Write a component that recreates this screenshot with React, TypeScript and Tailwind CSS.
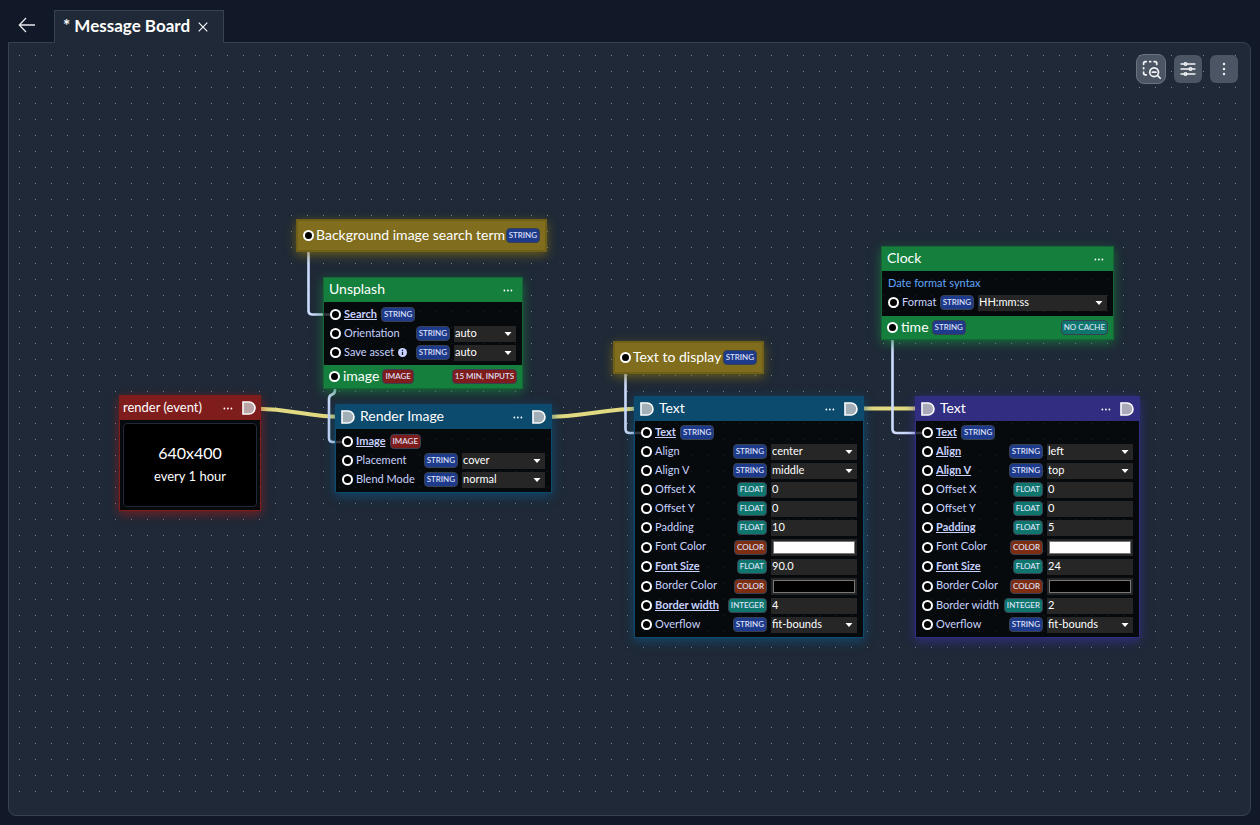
import { useState } from "react";
import type { ReactNode } from "react";
import { TbZoomOutArea } from "react-icons/tb";
import { HiOutlineAdjustmentsHorizontal } from "react-icons/hi2";

type Kind = "STRING" | "FLOAT" | "INTEGER" | "COLOR" | "IMAGE";

type Field = {
  name: string;
  kind: Kind;
  value?: string;
  control?: "select" | "text" | "color";
  changed?: boolean;
  info?: boolean;
};

const kindColors: Record<Kind, string> = {
  STRING: "bg-[#1e3a8a]",
  FLOAT: "bg-[#0f766e]",
  INTEGER: "bg-[#0f766e]",
  COLOR: "bg-[#7c2d12]",
  IMAGE: "bg-[#7f1d1d]",
};

function Tag({ color, children }: { color: string; children: ReactNode }) {
  return (
    <span
      className={`flex h-[15px] shrink-0 items-center rounded border border-[#374151] px-[2px] pb-px text-[8px] leading-none font-medium whitespace-nowrap text-[#e0e7ff] ${color}`}
    >
      {children}
    </span>
  );
}

function Port() {
  return <span className="size-[11px] shrink-0 rounded-full border-2 border-white bg-black" />;
}

function FlowPort({ label }: { label: string }) {
  return (
    <svg viewBox="0 0 14 14" className="size-[14px] shrink-0" role="img" aria-label={label}>
      <path d="M1.2 1.2H7a5.8 5.8 0 0 1 0 11.6H1.2Z" fill="#c8c8c8" fillOpacity="0.8" />
      <path d="M1 1H7a6 6 0 0 1 0 12H1Z" fill="none" stroke="#fff" strokeWidth="1.6" />
    </svg>
  );
}

function NodeMenu() {
  return (
    <button type="button" aria-label="Node menu" className="flex h-4 items-center px-1">
      <svg viewBox="0 0 10 3" className="h-[3px] w-[10px]" fill="#fff">
        <circle cx="1.4" cy="1.5" r="0.9" />
        <circle cx="4.9" cy="1.5" r="0.9" />
        <circle cx="8.4" cy="1.5" r="0.9" />
      </svg>
    </button>
  );
}

function Control({ id, field, width }: { id: string; field: Field; width: string }) {
  const [value, setValue] = useState(field.value ?? "");
  if (field.control === "select") {
    return (
      <span className={`relative flex h-4 shrink-0 ${width}`}>
        <select
          id={id}
          value={value}
          onChange={(e) => setValue(e.target.value)}
          className="h-4 w-full appearance-none rounded-none bg-[#262626] pb-0.5 pl-px text-[11px] leading-[14px] text-white outline-none"
        >
          <option>{field.value}</option>
        </select>
        <svg viewBox="0 0 8 4" className="pointer-events-none absolute top-[6px] right-1 h-1 w-2" fill="#fff">
          <path d="M0.5 0h7L4 4Z" />
        </svg>
      </span>
    );
  }
  if (field.control === "color") {
    return (
      <input
        id={id}
        type="color"
        value={value}
        onChange={(e) => setValue(e.target.value)}
        className={`h-[17px] shrink-0 bg-[#262626] p-[2px] [&::-webkit-color-swatch]:border-[#777] [&::-webkit-color-swatch-wrapper]:p-0 ${width}`}
      />
    );
  }
  return (
    <input
      id={id}
      type="text"
      value={value}
      onChange={(e) => setValue(e.target.value)}
      className={`h-4 shrink-0 bg-[#262626] pb-0.5 pl-px text-[11px] leading-[14px] text-white outline-none ${width}`}
    />
  );
}

function FieldRow({ nodeId, field, width }: { nodeId: string; field: Field; width: string }) {
  const id = `${nodeId}-${field.name.toLowerCase().replace(/ /g, "-")}`;
  const tone = field.changed ? "font-bold underline" : "";
  const height = field.control === "color" ? "h-5" : "h-[19px]";
  return (
    <div className={`flex items-center ${height}`}>
      <Port />
      {field.control ? (
        <label
          htmlFor={id}
          className={`ml-[3px] flex items-center gap-1 pb-0.5 text-[11px] leading-4 whitespace-nowrap text-[#c7d2fe] ${tone}`}
        >
          {field.name}
          {field.info && (
            <svg viewBox="0 0 10 10" className="mt-0.5 size-[9px]" aria-hidden="true">
              <circle cx="5" cy="5" r="5" fill="#c7d2fe" />
              <path d="M5 4.2v3.6M5 2v1.3" stroke="#111827" strokeWidth="1.4" />
            </svg>
          )}
        </label>
      ) : (
        <span className={`ml-[3px] pb-0.5 text-[11px] leading-4 whitespace-nowrap text-[#c7d2fe] ${tone}`}>{field.name}</span>
      )}
      <span className={field.control ? "mr-1 ml-auto flex" : "ml-1 flex"}>
        <Tag color={kindColors[field.kind]}>{field.kind}</Tag>
      </span>
      {field.control && <Control id={id} field={field} width={width} />}
    </div>
  );
}

function StateNode({ place, title }: { place: string; title: string }) {
  return (
    <section
      className={`absolute flex h-[33px] items-center justify-between border-2 border-[#6f5f19] bg-[#806d1d] px-[5px] text-[14px] text-white shadow-[0_3px_10px_0_rgba(133,112,20,0.7)] ${place}`}
    >
      <span className="flex items-center gap-[2px] whitespace-nowrap">
        <Port />
        <span className="pb-0.5">{title}</span>
      </span>
      <Tag color={kindColors.STRING}>STRING</Tag>
    </section>
  );
}

type NodeProps = {
  place: string;
  frame: string;
  header: string;
  title: string;
  compact?: boolean;
  flowIn?: boolean;
  flowOut?: boolean;
  children: ReactNode;
};

function GraphNode({ place, frame, header, title, compact, flowIn, flowOut, children }: NodeProps) {
  return (
    <section className={`absolute border ${place} ${frame}`}>
      <header className={`flex h-6 items-center text-white ${compact ? "pr-1 pl-[3px]" : "px-[5px]"} ${header}`}>
        {flowIn && (
          <span className="mr-[5px] flex">
            <FlowPort label="Previous" />
          </span>
        )}
        <h2 className={`pb-0.5 leading-[22px] ${compact ? "text-[13px]" : "text-[14px]"}`}>{title}</h2>
        <span className={`ml-auto flex items-center ${flowOut ? "gap-[5px]" : ""}`}>
          <NodeMenu />
          {flowOut && <FlowPort label="Next" />}
        </span>
      </header>
      {children}
    </section>
  );
}

const blue = "border-[#0c4a6e] shadow-[0_3px_10px_0_rgba(12,84,128,0.75)]";
const green = "border-[#166534] shadow-[0_3px_10px_0_rgba(21,128,61,0.75)]";
const red = "border-[#7f1d1d] shadow-[0_3px_10px_0_rgba(153,27,27,0.7)]";
const violet = "border-[#312e81] shadow-[0_3px_10px_0_rgba(55,48,163,0.7)]";

function textFields(align: string, alignV: string, padding: string, size: string, border: string, changed: string[]): Field[] {
  const fields: Field[] = [
    { name: "Text", kind: "STRING" },
    { name: "Align", kind: "STRING", control: "select", value: align },
    { name: "Align V", kind: "STRING", control: "select", value: alignV },
    { name: "Offset X", kind: "FLOAT", control: "text", value: "0" },
    { name: "Offset Y", kind: "FLOAT", control: "text", value: "0" },
    { name: "Padding", kind: "FLOAT", control: "text", value: padding },
    { name: "Font Color", kind: "COLOR", control: "color", value: "#ffffff" },
    { name: "Font Size", kind: "FLOAT", control: "text", value: size },
    { name: "Border Color", kind: "COLOR", control: "color", value: "#000000" },
    { name: "Border width", kind: "INTEGER", control: "text", value: border },
    { name: "Overflow", kind: "STRING", control: "select", value: "fit-bounds" },
  ];
  return fields.map((f) => ({ ...f, changed: changed.includes(f.name) }));
}

const unsplashFields: Field[] = [
  { name: "Search", kind: "STRING", changed: true },
  { name: "Orientation", kind: "STRING", control: "select", value: "auto" },
  { name: "Save asset", kind: "STRING", control: "select", value: "auto", info: true },
];
const imageFields: Field[] = [
  { name: "Image", kind: "IMAGE", changed: true },
  { name: "Placement", kind: "STRING", control: "select", value: "cover" },
  { name: "Blend Mode", kind: "STRING", control: "select", value: "normal" },
];
const clockFields: Field[] = [{ name: "Format", kind: "STRING", control: "select", value: "HH:mm:ss" }];
const firstText = textFields("center", "middle", "10", "90.0", "4", ["Text", "Font Size", "Border width"]);
const secondText = textFields("left", "top", "5", "24", "2", ["Text", "Align", "Align V", "Padding", "Font Size"]);

function Fields({ id, fields, width, pad }: { id: string; fields: Field[]; width: string; pad: string }) {
  return (
    <div className={`bg-black/75 px-1.5 ${pad}`}>
      {fields.map((f) => (
        <FieldRow key={f.name} nodeId={id} field={f} width={width} />
      ))}
    </div>
  );
}

function Output({ name, kind, children }: { name: string; kind: Kind; children: ReactNode }) {
  return (
    <footer className="flex h-[23px] items-center justify-between bg-[#15803d] px-[5px] text-white">
      <span className="flex items-center gap-[3px] text-[14px] leading-5">
        <Port />
        <span className="pb-0.5">{name}</span>
        <Tag color={kindColors[kind]}>{kind}</Tag>
      </span>
      {children}
    </footer>
  );
}

function Edges() {
  return (
    <svg viewBox="9 43 1241 772" className="pointer-events-none absolute top-0 left-0 h-[772px] w-[1241px]" fill="none" aria-hidden="true">
      <g stroke="#e2da82" strokeWidth="4">
        <path d="M250 408.5C299 408.5 299 417 348 417" />
        <path d="M540 417C594 417 594 408.5 648 408.5" />
        <path d="M850 408.5H928" />
      </g>
      <g stroke="#cddcfd" strokeWidth="2.6">
        <path d="M308.5 236V310.5Q308.5 314.5 312.5 314.5H336" />
        <path d="M335 377V390Q335 393.5 332 394.5Q329 395.5 329 399V438Q329 442 333 442H348" />
        <path d="M625.5 358V429Q625.5 433 629.5 433H647" />
        <path d="M892.5 328V429Q892.5 433 896.5 433H927" />
      </g>
    </svg>
  );
}

const toolButton = "flex size-7 items-center justify-center rounded-md bg-[#4b5563] text-[#f3f4f6]";

export default function App() {
  return (
    <main className="flex min-h-screen flex-col bg-[#111827] pr-[9px] pb-[9px] pl-2 font-['Lato','Liberation_Sans',sans-serif] text-white">
      <nav className="flex h-[43px] items-end">
        <button type="button" aria-label="Back" className="flex h-9 w-[46px] items-center pb-[1px] pl-2.5">
          <svg viewBox="0 0 18 16" className="h-4 w-[18px]" fill="none" stroke="#e5e7eb" strokeWidth="1.3">
            <path d="M17 8H1.5M8 1 1.3 8 8 15" />
          </svg>
        </button>
        <div className="relative z-10 flex h-[33px] w-[170px] items-center border border-b-0 border-[#374151] bg-[#1f2937] pl-2">
          <a href="#board" className="pb-0.5 text-[17px] leading-6 font-bold whitespace-nowrap">
            * Message Board
          </a>
          <button type="button" aria-label="Close tab" className="ml-2">
            <svg viewBox="0 0 10 10" className="size-[10px]" fill="none" stroke="#fff" strokeWidth="1.1">
              <path d="m.7.7 8.6 8.6M9.3.7.7 9.3" />
            </svg>
          </button>
        </div>
      </nav>

      <div className="relative -mt-px flex grow flex-col overflow-hidden rounded-lg rounded-tl-none border border-[#374151] bg-[#1f2937] p-2">
        <svg className="w-full grow" aria-hidden="true">
          <defs>
            <pattern id="dots" width="16" height="16" patternUnits="userSpaceOnUse">
              <rect x="2" y="4" width="1" height="1" fill="#79818d" />
            </pattern>
          </defs>
          <rect width="100%" height="100%" fill="url(#dots)" />
        </svg>

        <div className="absolute inset-0">
          <Edges />

          <StateNode place="left-[287px] top-[176px] w-[251px]" title="Background image search term" />
          <StateNode place="left-[604px] top-[298px] w-[151px]" title="Text to display" />

          <GraphNode place="left-[314px] top-[234px] w-[200px]" frame={green} header="bg-[#15803d]" title="Unsplash">
            <Fields id="unsplash" fields={unsplashFields} width="w-[62px]" pad="pt-[3px] pb-[3px]" />
            <Output name="image" kind="IMAGE">
              <Tag color={kindColors.IMAGE}>15 MIN, INPUTS</Tag>
            </Output>
          </GraphNode>

          <GraphNode place="left-[110px] top-[352px] w-[142px]" frame={red} header="bg-[#7f1d1d]" title="render (event)" compact flowOut>
            <div className="bg-black/75 p-[3px]">
              <div className="flex h-[84px] flex-col items-center justify-center gap-[3px] rounded border border-[#1f2937] bg-black pb-0.5">
                <p className="text-[16px] leading-5">640x400</p>
                <p className="text-[13px] leading-5">every 1 hour</p>
              </div>
            </div>
          </GraphNode>

          <GraphNode place="left-[326px] top-[361px] w-[217px]" frame={blue} header="bg-[#0c4a6e]" title="Render Image" flowIn flowOut>
            <Fields id="render-image" fields={imageFields} width="w-[83px]" pad="pt-[3px] pb-[3px]" />
          </GraphNode>

          <GraphNode place="left-[625px] top-[353px] w-[230px]" frame={blue} header="bg-[#0c4a6e]" title="Text" flowIn flowOut>
            <Fields id="text-one" fields={firstText} width="w-[86px]" pad="pt-[2px] pb-[3px]" />
          </GraphNode>

          <GraphNode place="left-[872px] top-[203px] w-[233px]" frame={green} header="bg-[#15803d]" title="Clock">
            <div className="bg-black/75 px-1.5 pt-[2px]">
              <a href="#date-format" className="block h-5 text-[11px] leading-[19px] text-[#60a5fa]">
                Date format syntax
              </a>
            </div>
            <Fields id="clock" fields={clockFields} width="w-[129px]" pad="pb-1" />
            <Output name="time" kind="STRING">
              <Tag color="bg-[#0f766e]">NO CACHE</Tag>
            </Output>
          </GraphNode>

          <GraphNode place="left-[906px] top-[353px] w-[225px]" frame={violet} header="bg-[#312e81]" title="Text" flowIn flowOut>
            <Fields id="text-two" fields={secondText} width="w-[86px]" pad="pt-[2px] pb-[3px]" />
          </GraphNode>
        </div>

        <div className="absolute top-[11px] right-3 flex items-center gap-2">
          <button type="button" aria-label="Fit view" className="flex size-[30px] items-center justify-center rounded-lg border border-[#6b7280] bg-[#4b5563] text-[#f3f4f6]">
            <TbZoomOutArea className="size-[21px]" />
          </button>
          <button type="button" aria-label="Settings" className={toolButton}>
            <HiOutlineAdjustmentsHorizontal className="size-5" strokeWidth={2} />
          </button>
          <button type="button" aria-label="More" className={toolButton}>
            <svg viewBox="0 0 20 20" className="size-5" fill="currentColor">
              <circle cx="10" cy="5" r="1.2" />
              <circle cx="10" cy="10" r="1.2" />
              <circle cx="10" cy="15" r="1.2" />
            </svg>
          </button>
        </div>
      </div>
    </main>
  );
}
